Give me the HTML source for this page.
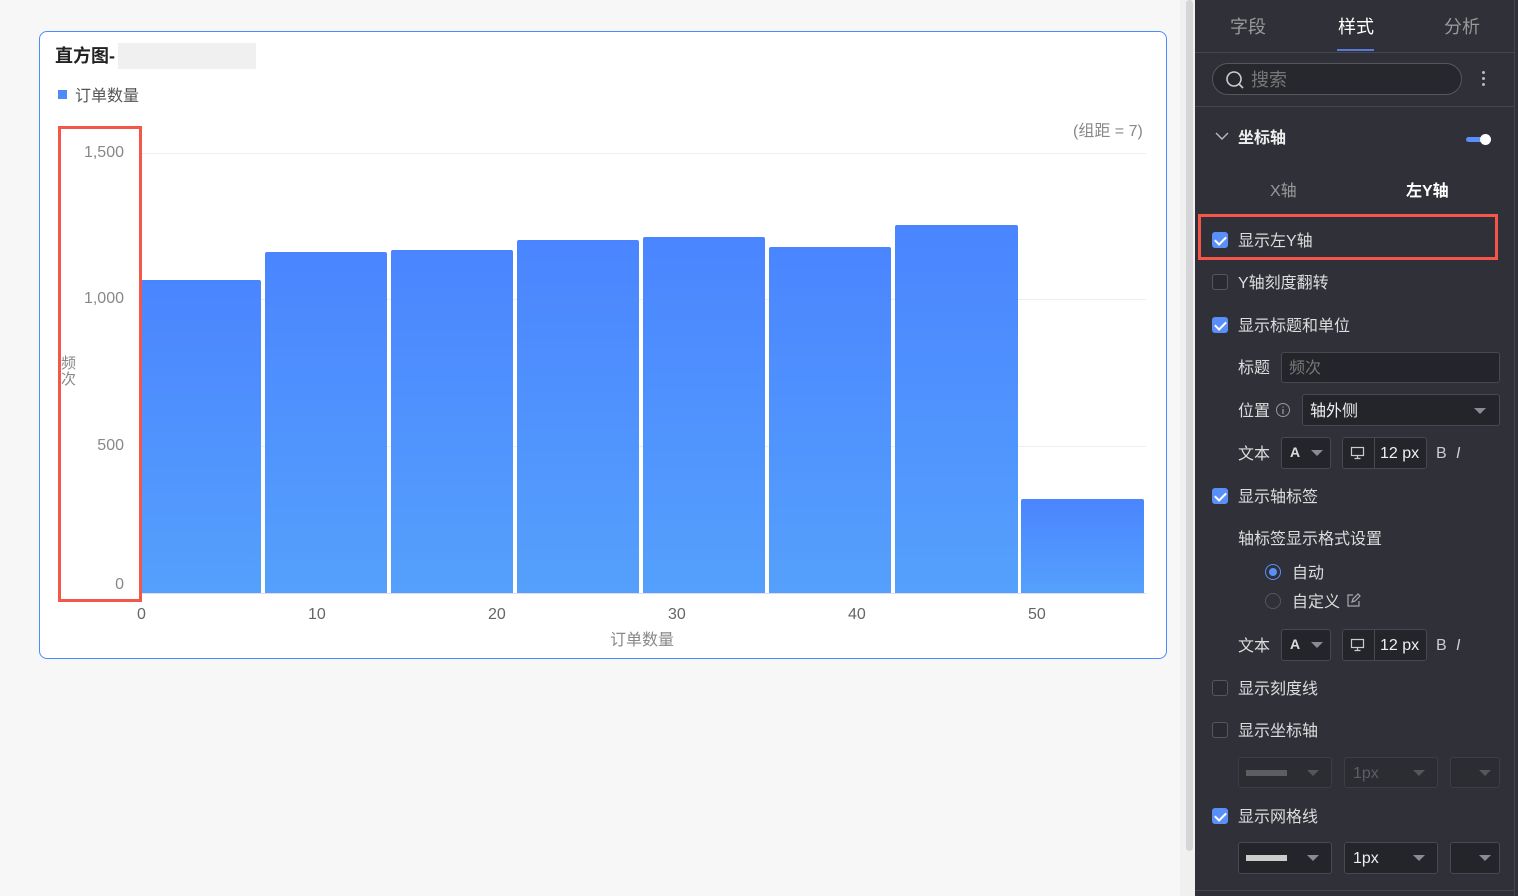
<!DOCTYPE html>
<html><head><meta charset="utf-8"><style>
*{margin:0;padding:0;box-sizing:border-box}
body{width:1518px;height:896px;background:#f7f7f8;font-family:"Liberation Sans","Noto Sans CJK SC",sans-serif;position:relative;overflow:hidden}
.a{position:absolute;white-space:nowrap}
.card{left:39px;top:31px;width:1128px;height:628px;background:#fff;border:1.5px solid #4a8cff;border-radius:8px}
.bar{position:absolute;bottom:303px;background:linear-gradient(#4a85ff,#55a0fc);border-radius:2px 2px 0 0}
.yl{font-size:16px;color:#888;text-align:right;width:60px;left:64px}
.xl{font-size:16px;color:#666;top:606px}
.grid{left:141px;width:1005px;height:1px;background:#eeeef0}
.panel{left:1195px;top:0;width:323px;height:896px;background:#2f3038}
.t{color:#ddd;font-size:16px;transform:translateY(-3px)}
.l{color:#ddd;font-size:16px;transform:translateY(2px)}
.cb{width:16px;height:16px;border:1px solid #555760;border-radius:3px;background:#2a2b31}
.cb.on{background:#5a8ef8;border-color:#5a8ef8}
.cb.on:after{content:"";position:absolute;left:4px;top:1px;width:5px;height:9px;border:solid #fff;border-width:0 2px 2px 0;transform:rotate(45deg)}
.box{border:1px solid #474850;border-radius:3px;background:#24252b}
.tri{width:0;height:0;border-left:6px solid transparent;border-right:6px solid transparent;border-top:6px solid #8a8c95}
</style></head><body>
<div class="a card"></div>
<div class="a" style="left:55px;top:42px;font-size:18px;font-weight:bold;color:#222">直方图-</div>
<div class="a" style="left:118px;top:43px;width:138px;height:26px;background:#f0f0f1"></div>
<div class="a" style="left:58px;top:90px;width:9px;height:9px;background:#4d8cf8"></div>
<div class="a" style="left:75px;top:82px;font-size:16px;color:#555">订单数量</div>
<div class="a" style="left:1073px;top:117px;font-size:16px;color:#888">(组距 = 7)</div>
<div class="a grid" style="top:153px"></div>
<div class="a grid" style="top:299px"></div>
<div class="a grid" style="top:446px"></div>
<div class="a" style="left:141px;top:593px;width:1005px;height:1px;background:#dde"></div>
<div class="a yl" style="top:144px">1,500</div>
<div class="a yl" style="top:290px">1,000</div>
<div class="a yl" style="top:437px">500</div>
<div class="a yl" style="top:576px">0</div>
<div class="a" style="left:61px;top:356px;font-size:15px;line-height:16px;color:#888;white-space:normal;width:16px">频次</div>
<div style="position:absolute;left:0;top:0;width:1518px;height:896px">
<div class="bar" style="left:141px;width:120px;height:313px"></div>
<div class="bar" style="left:265px;width:122px;height:341px"></div>
<div class="bar" style="left:391px;width:122px;height:343px"></div>
<div class="bar" style="left:517px;width:122px;height:353px"></div>
<div class="bar" style="left:643px;width:122px;height:356px"></div>
<div class="bar" style="left:769px;width:122px;height:346px"></div>
<div class="bar" style="left:895px;width:123px;height:368px"></div>
<div class="bar" style="left:1021px;width:123px;height:94px"></div>
</div>
<div class="a xl" style="left:137px">0</div>
<div class="a xl" style="left:308px">10</div>
<div class="a xl" style="left:488px">20</div>
<div class="a xl" style="left:668px">30</div>
<div class="a xl" style="left:848px">40</div>
<div class="a xl" style="left:1028px">50</div>
<div class="a" style="left:610px;top:626px;font-size:16px;color:#888">订单数量</div>
<div class="a" style="left:58px;top:126px;width:84px;height:476px;border:3px solid #f4564a"></div>

<div class="a" style="left:1180px;top:0;width:15px;height:896px;background:#f0f0f1"></div>
<div class="a" style="left:1186px;top:0;width:7px;height:851px;background:#d6d6d8;border-radius:4px"></div>
<div class="a panel"></div>
<div class="a" style="left:1514px;top:0;width:1px;height:896px;background:#44454c"></div>
<div class="a" style="left:1230px;top:13px;font-size:18px;color:#999">字段</div>
<div class="a" style="left:1338px;top:13px;font-size:18px;color:#fff">样式</div>
<div class="a" style="left:1444px;top:13px;font-size:18px;color:#999">分析</div>
<div class="a" style="left:1337px;top:49px;width:37px;height:2px;background:#5a78d6"></div>
<div class="a" style="left:1195px;top:52px;width:320px;height:1px;background:#45464d"></div>
<div class="a" style="left:1212px;top:63px;width:250px;height:32px;border:1px solid #55565e;border-radius:16px;background:#27282e"></div>
<svg class="a" style="left:1225px;top:70px" width="20" height="20"><circle cx="9" cy="9" r="7" fill="none" stroke="#ccc" stroke-width="1.6"/><path d="M14 14l4 4" stroke="#ccc" stroke-width="1.6"/></svg>
<div class="a" style="left:1251px;top:66px;font-size:18px;color:#777">搜索</div>
<div class="a" style="left:1482px;top:71px;width:3px;height:3px;background:#bbb;border-radius:2px;box-shadow:0 6px #bbb,0 12px #bbb"></div>
<div class="a" style="left:1195px;top:106px;width:320px;height:1px;background:#45464d"></div>
<svg class="a" style="left:1215px;top:131px" width="14" height="10"><path d="M1 2l6 6 6-6" fill="none" stroke="#bbb" stroke-width="1.4"/></svg>
<div class="a t" style="left:1238px;top:127px;font-weight:bold;color:#eee">坐标轴</div>
<div class="a" style="left:1466px;top:137px;width:22px;height:5px;background:#5a8ef8;border-radius:3px"></div>
<div class="a" style="left:1480px;top:134px;width:11px;height:11px;background:#fff;border-radius:6px"></div>
<div class="a t" style="left:1270px;top:180px;color:#999">X轴</div>
<div class="a t" style="left:1406px;top:180px;font-weight:bold;color:#fff">左Y轴</div>
<div class="a" style="left:1198px;top:214px;width:300px;height:46px;border:3px solid #f4564a"></div>

<div class="a cb on" style="left:1212px;top:232px"></div><div class="a t" style="left:1238px;top:230px">显示左Y轴</div>
<div class="a cb" style="left:1212px;top:274px"></div><div class="a t" style="left:1238px;top:272px">Y轴刻度翻转</div>
<div class="a cb on" style="left:1212px;top:317px"></div><div class="a t" style="left:1238px;top:315px">显示标题和单位</div>
<div class="a t" style="left:1238px;top:357px">标题</div>
<div class="a box" style="left:1281px;top:352px;width:219px;height:31px"></div><div class="a t" style="left:1289px;top:357px;color:#777">频次</div>
<div class="a t" style="left:1238px;top:400px">位置</div>
<svg class="a" style="left:1275px;top:402px" width="16" height="16"><circle cx="8" cy="8" r="6.5" fill="none" stroke="#999"/><path d="M8 7v5M8 4.5v1" stroke="#999" stroke-width="1.3"/></svg>
<div class="a box" style="left:1302px;top:394px;width:198px;height:32px"></div><div class="a t" style="left:1310px;top:400px;color:#eee">轴外侧</div><div class="a tri" style="left:1474px;top:408px"></div>

<div class="a t" style="left:1238px;top:443px">文本</div>
<div class="a box" style="left:1281px;top:437px;width:50px;height:32px"></div><div class="a" style="left:1290px;top:444px;font-size:14px;font-weight:bold;color:#ddd">A</div><div class="a tri" style="left:1311px;top:450px"></div>
<div class="a box" style="left:1342px;top:437px;width:85px;height:32px"></div><div class="a" style="left:1374px;top:438px;width:1px;height:30px;background:#474850"></div>
<svg class="a" style="left:1350px;top:446px" width="16" height="14"><rect x="1.5" y="1.5" width="12" height="8" fill="none" stroke="#ccc" stroke-width="1.2"/><path d="M7.5 10v2.5M4.5 12.5h6" stroke="#ccc" stroke-width="1.2"/></svg>
<div class="a l" style="left:1380px;top:443px;color:#eee">12 px</div>
<div class="a l" style="left:1436px;top:443px;color:#ccc">B</div><div class="a l" style="left:1456px;top:443px;color:#ccc;font-style:italic">I</div>

<div class="a cb on" style="left:1212px;top:488px"></div><div class="a t" style="left:1238px;top:486px">显示轴标签</div>
<div class="a t" style="left:1238px;top:528px">轴标签显示格式设置</div>
<div class="a" style="left:1265px;top:564px;width:16px;height:16px;border:1.5px solid #5a8ef8;border-radius:50%"></div><div class="a" style="left:1269px;top:568px;width:8px;height:8px;background:#5a8ef8;border-radius:50%"></div>
<div class="a t" style="left:1292px;top:562px">自动</div>
<div class="a" style="left:1265px;top:593px;width:16px;height:16px;border:1px solid #555760;border-radius:50%"></div>
<div class="a t" style="left:1292px;top:591px">自定义</div>
<svg class="a" style="left:1346px;top:593px" width="15" height="15"><path d="M7 2H2v11h11V8M6 9l1-3 5-5 2 2-5 5z" fill="none" stroke="#aaa" stroke-width="1.2"/></svg>

<div class="a t" style="left:1238px;top:635px">文本</div>
<div class="a box" style="left:1281px;top:629px;width:50px;height:32px"></div><div class="a" style="left:1290px;top:636px;font-size:14px;font-weight:bold;color:#ddd">A</div><div class="a tri" style="left:1311px;top:642px"></div>
<div class="a box" style="left:1342px;top:629px;width:85px;height:32px"></div><div class="a" style="left:1374px;top:630px;width:1px;height:30px;background:#474850"></div>
<svg class="a" style="left:1350px;top:638px" width="16" height="14"><rect x="1.5" y="1.5" width="12" height="8" fill="none" stroke="#ccc" stroke-width="1.2"/><path d="M7.5 10v2.5M4.5 12.5h6" stroke="#ccc" stroke-width="1.2"/></svg>
<div class="a l" style="left:1380px;top:635px;color:#eee">12 px</div>
<div class="a l" style="left:1436px;top:635px;color:#ccc">B</div><div class="a l" style="left:1456px;top:635px;color:#ccc;font-style:italic">I</div>

<div class="a cb" style="left:1212px;top:680px"></div><div class="a t" style="left:1238px;top:678px">显示刻度线</div>
<div class="a cb" style="left:1212px;top:722px"></div><div class="a t" style="left:1238px;top:720px">显示坐标轴</div>
<div class="a box" style="left:1238px;top:757px;width:94px;height:31px;background:#2c2d33;border-color:#3d3e45"></div><div class="a" style="left:1246px;top:770px;width:41px;height:6px;background:#5d5e64"></div><div class="a tri" style="left:1307px;top:770px;border-top-color:#55565c"></div>
<div class="a box" style="left:1344px;top:757px;width:94px;height:31px;background:#2c2d33;border-color:#3d3e45"></div><div class="a l" style="left:1353px;top:763px;color:#5d5e64">1px</div><div class="a tri" style="left:1413px;top:770px;border-top-color:#55565c"></div>
<div class="a box" style="left:1450px;top:757px;width:50px;height:31px;background:#2c2d33;border-color:#3d3e45"></div><div class="a tri" style="left:1479px;top:770px;border-top-color:#55565c"></div>

<div class="a cb on" style="left:1212px;top:808px"></div><div class="a t" style="left:1238px;top:806px">显示网格线</div>
<div class="a box" style="left:1238px;top:842px;width:94px;height:32px"></div><div class="a" style="left:1246px;top:855px;width:41px;height:6px;background:#ccc"></div><div class="a tri" style="left:1307px;top:855px"></div>
<div class="a box" style="left:1344px;top:842px;width:94px;height:32px"></div><div class="a l" style="left:1353px;top:848px;color:#eee">1px</div><div class="a tri" style="left:1413px;top:855px"></div>
<div class="a box" style="left:1450px;top:842px;width:50px;height:32px"></div><div class="a tri" style="left:1479px;top:855px"></div>
<div class="a" style="left:1195px;top:890px;width:320px;height:1px;background:#45464d"></div>
</body></html>
